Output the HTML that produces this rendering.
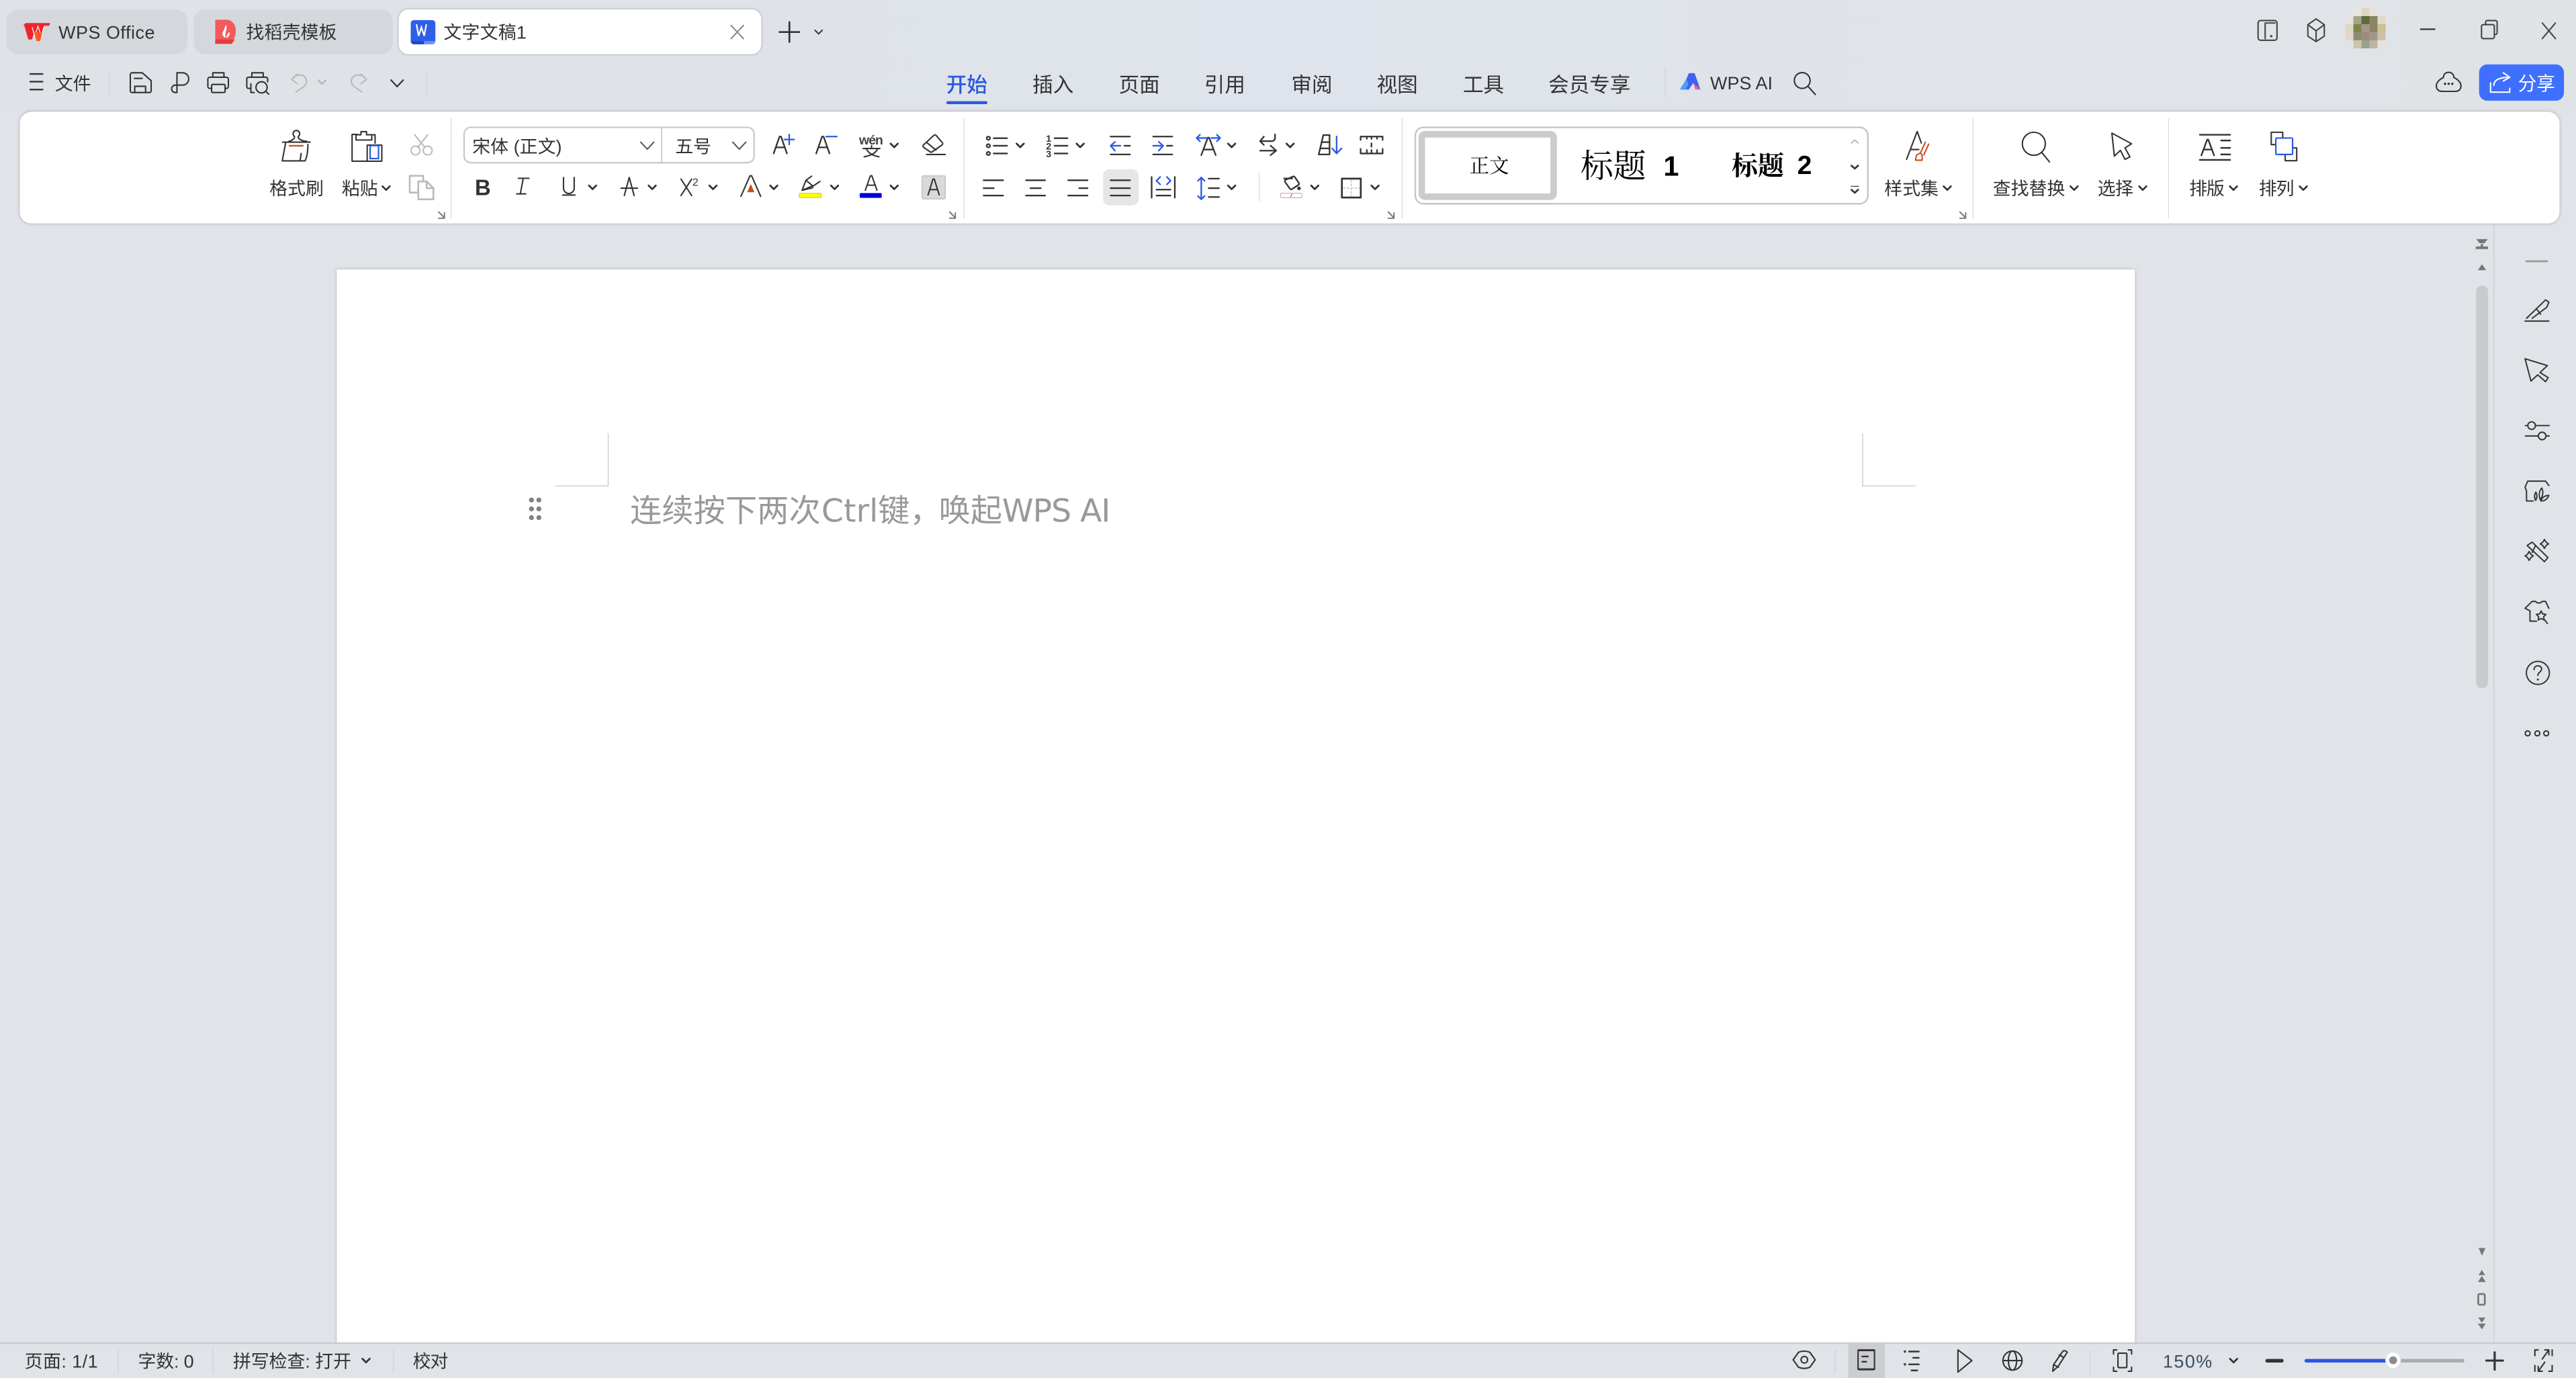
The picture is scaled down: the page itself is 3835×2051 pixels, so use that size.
<!DOCTYPE html>
<html><head><meta charset="utf-8"><style>
html,body{margin:0;padding:0;background:#e0e3e7;width:3835px;height:2051px;overflow:hidden}
svg{display:block}
text{font-family:"Liberation Sans","Noto Sans CJK SC",sans-serif;fill:#333;font-size:11px}
.i{fill:none;stroke:#333;stroke-width:.85;stroke-linecap:round;stroke-linejoin:round}
.g{stroke:#b9b9b9}
.c{fill:none;stroke:#333;stroke-width:1.1;stroke-linecap:round;stroke-linejoin:round}
.s{stroke:#d2d4d8;stroke-width:.5}
.bl{stroke:#2a5be0}
</style></head><body>
<svg width="3835" height="2051" viewBox="0 0 1568 838.6" xmlns="http://www.w3.org/2000/svg">
<defs>
<linearGradient id="bg" x1="0" x2="1" y1="0" y2="0"><stop offset="0" stop-color="#dfe2e6"/><stop offset=".5" stop-color="#dfe3eb"/><stop offset="1" stop-color="#e0e3e6"/></linearGradient>
<path id="ch" d="M-2.200-1.100L0 1.100L2.200-1.100"/>
</defs>
<rect width="1568" height="838.6" fill="#e0e3e7"/>
<rect width="1568" height="68" fill="url(#bg)"/>

<!-- tabs -->
<rect x="4" y="5.700" width="110" height="27.300" rx="7" fill="#d4d8dc"/>
<rect x="118" y="5.700" width="121" height="27.300" rx="7" fill="#d4d8dc"/>
<rect x="242.700" y="5.700" width="220.700" height="27.300" rx="6" fill="#fff" style="filter:drop-shadow(0 .3px .8px rgba(0,0,0,.3))"/>
<path d="M15.500 14h15l-.6 1.700h-3.200l-2.200 8.300h-2.400l-1.300-4.800-1.300 4.800h-2.300l-2.400-8.300h-.7z" fill="#f0242c"/>
<path d="M19.500 16.500l1.600 5.500 2-6 2 6 1.600-5.500" fill="none" stroke="#fff" stroke-width=".5"/>
<path d="M20.700 19.500l1.500 5.500h2.200l1.300-5z" fill="#ff5a1f"/>
<text x="35.600" y="23.500" textLength="58.600">WPS Office</text>
<path d="M131 12h7a5.500 6.500 0 0 1 5.500 7v0a5.500 7.500 0 0 1-5.500 7.500h-7z" fill="#f35a5a"/>
<path d="M131 24h12l-2 2.700h-10z" fill="#e23c3c"/>
<path d="M137.500 15c1 2 0 3.500-.3 5.500-.3 1.700.6 2.500.6 2.500s-2.400-.2-2.400-2.500c0-1 .5-1.500.8-2M137.800 23c.2-2 1-3 2-3.500 0 2-.6 3-2 3.500z" fill="#fff"/>
<text x="149.800" y="23.500" textLength="55.200">找稻壳模板</text>
<rect x="250" y="12.200" width="15" height="14.800" rx="2" fill="#2f5fe8"/>
<path d="M250 25h8v2h-6a2 2 0 0 1-2-2z" fill="#1f49c8"/>
<path d="M258 25h7v0a2 2 0 0 1-2 2h-5z" fill="#6d94f5"/>
<path d="M253.500 14.800l1.300 7 1.700-5.200 1.700 5.200 1.300-7" fill="none" stroke="#fff" stroke-width=".9"/>
<text x="270" y="23.500" textLength="50.500">文字文稿1</text>
<path class="i" style="stroke:#888" d="M445 15.500l7.500 8M452.500 15.500l-7.500 8"/>
<path class="i" style="stroke-width:1.100" d="M474.500 19.500h12M480.500 13.500v12"/>
<use href="#ch" x="498.300" y="19.500" class="c" style="stroke-width:.8"/>

<!-- title bar right -->
<g class="i" style="stroke:#444">
<rect x="1374.500" y="12.500" width="11.500" height="12" rx="1.500"/>
<path d="M1378.800 23.500v-9.500h6"/><circle cx="1382.500" cy="22" r=".3"/>
<path d="M1409.800 11.500l5 3.500v7l-5 3.300-5-3.300v-7zM1404.800 15l5 3.800 5-3.800M1409.800 18.800v6.500"/>
<path d="M1473.500 17.800h8.500" style="stroke-width:1"/>
<rect x="1510.500" y="15" width="7.800" height="8.500" rx="1"/>
<path d="M1513 15v-1.500a1 1 0 0 1 1-1h5a1 1 0 0 1 1 1v6.500a1 1 0 0 1-1 1h-.7"/>
<path d="M1547.500 14l8 9.500M1555.500 14l-8 9.500"/>
</g>
<g transform="translate(1427.600 4.900) scale(.4088)">
<rect x="12" y="0" width="12" height="12" fill="#e6e6e0"/><rect x="24" y="0" width="12" height="12" fill="#ddd6c3"/><rect x="36" y="0" width="12" height="12" fill="#e6e3da"/>
<rect x="0" y="12" width="12" height="12" fill="#e4e4e0"/><rect x="12" y="12" width="12" height="12" fill="#a6a484"/><rect x="24" y="12" width="12" height="12" fill="#5f693f"/><rect x="36" y="12" width="12" height="12" fill="#8b8560"/><rect x="48" y="12" width="12" height="12" fill="#e0dacb"/>
<rect x="0" y="24" width="12" height="12" fill="#dcd8c2"/><rect x="12" y="24" width="12" height="12" fill="#7e8347"/><rect x="24" y="24" width="12" height="12" fill="#a39785"/><rect x="36" y="24" width="12" height="12" fill="#8d8364"/><rect x="48" y="24" width="12" height="12" fill="#cdc094"/>
<rect x="0" y="36" width="12" height="12" fill="#e2d9cb"/><rect x="12" y="36" width="12" height="12" fill="#8f8a74"/><rect x="24" y="36" width="12" height="12" fill="#9e8a7e"/><rect x="36" y="36" width="12" height="12" fill="#a3978c"/><rect x="48" y="36" width="12" height="12" fill="#cfc0a4"/>
<rect x="12" y="48" width="12" height="12" fill="#cbc5ac"/><rect x="24" y="48" width="12" height="12" fill="#98a08e"/><rect x="36" y="48" width="12" height="12" fill="#bdb5a0"/><rect x="48" y="48" width="12" height="12" fill="#e4e2dc"/>
</g>

<!-- quick access -->
<path class="i" style="stroke-width:1" d="M18.400 45h7.500M18.400 49.700h7.500M18.400 54.500h7.500"/>
<text x="33.400" y="54.800" textLength="22">文件</text>
<path class="s" d="M66.400 43v15M259.800 43v15"/>
<g class="i">
<path d="M79.300 45.300a1 1 0 0 1 1-1h6.300l5.400 4.800v6.200a1 1 0 0 1-1 1h-10.700a1 1 0 0 1-1-1z"/><path d="M82 56.300v-3.800h6.600v3.800M81.800 47.700h4.700"/>
<path d="M107.700 56.300V44.300h3.400a3.750 3.750 0 0 1 0 7.500h-3.400M107.700 51.800h-1a2.250 2.250 0 0 0 0 4.500h1"/>
<path d="M129.500 47v-2.700h6.800v2.700"/><rect x="126.500" y="47" width="12.500" height="6.800" rx="1.200"/><rect x="128.800" y="51.400" width="8.200" height="4.900" rx=".6" style="fill:#e0e3e7"/>
<path d="M153.300 47v-2.700h6.900v2.700M162.900 49.800v-1.800a1 1 0 0 0-1-1h-10.700a1 1 0 0 0-1 1v4.800a1 1 0 0 0 1 1h1.500M152.700 51v5.300h2"/><circle cx="159.200" cy="53.150" r="3.400"/><path d="M161.700 55.600l1.900 1.700"/>
</g>
<g class="i g">
<path d="M180.800 45.200l-3.300 3.100 3.300 2.600M177.700 48.500c1-2 3-2.900 5-2.900 2.200 0 3.800 1.800 3.800 3.900 0 1.500-.8 2.500-1.500 3.200l-4.800 3.200"/>
<path d="M219.700 45.200l3.300 3.100-3.300 2.600M222.800 48.300c-1-2-3-2.700-5-2.700-2.200 0-4 1.800-4 3.900 0 1 .8 2.200 1.500 3l4.800 3.400"/>
</g>
<use href="#ch" x="196" y="50" class="c" style="stroke:#b9b9b9"/>
<path class="c" style="stroke-width:.9" d="M238 48.700l3.700 4 3.700-4"/>

<!-- main tabs -->
<text x="576" y="56" textLength="25" style="fill:#2a57e0;font-size:12.500px;font-weight:500">开始</text>
<text x="628.500" y="56" textLength="25" style="font-size:12.500px">插入</text>
<text x="681" y="56" textLength="25" style="font-size:12.500px">页面</text>
<text x="733" y="56" textLength="25" style="font-size:12.500px">引用</text>
<text x="786" y="56" textLength="25" style="font-size:12.500px">审阅</text>
<text x="838" y="56" textLength="25" style="font-size:12.500px">视图</text>
<text x="890.500" y="56" textLength="25" style="font-size:12.500px">工具</text>
<text x="942.500" y="56" textLength="50" style="font-size:12.500px">会员专享</text>
<rect x="576" y="61.600" width="25" height="1.800" rx=".9" fill="#2a57e0"/>
<path class="s" d="M1013.500 41v18.500"/>
<path d="M1028 44.500h3.500l3.500 10h-3l-1.300-4-2.700 4h-4.200z" fill="#3b63f0"/>
<path d="M1022.500 54.500l4-6.500 1.200 3.500-1.800 3z" fill="#4ba0f8"/>
<path d="M1030.700 50.500l4.300 4h-3z" fill="#f15fa4"/>
<text x="1041" y="54.300" textLength="38">WPS AI</text>
<g class="i"><circle cx="1097" cy="49" r="4.800"/><path d="M1100.500 52.500l4.500 5"/></g>

<path class="i" d="M1490.500 44c-2 0-3.200 1.500-3.200 3.200-2.300 1-4.300 3-4.300 5 0 2.300 1.500 3.400 3.500 3.400h8c2 0 3.500-1.100 3.500-3.400 0-2-2-4-4.300-5 0-1.700-1.200-3.200-3.200-3.200z"/>
<circle cx="1488.300" cy="51" r=".7" fill="#333"/><circle cx="1490.500" cy="51" r=".7" fill="#333"/><circle cx="1492.700" cy="51" r=".7" fill="#333"/>
<rect x="1509" y="39.200" width="51.700" height="22.100" rx="5" fill="#3f6fff"/>
<g class="i" style="stroke:#fff"><path d="M1516 50.400v5.700h11.700v-2.300"/><path d="M1518 52c0-3 2.500-5 9.700-5M1523.800 44.300l3.900 2.700-3.900 2.300"/></g>
<text x="1532.700" y="54.800" textLength="22.600" style="fill:#fff;font-size:11.300px">分享</text>

<!-- ribbon panel -->
<rect x="12" y="68" width="1546" height="68" rx="7" fill="#fff" style="filter:drop-shadow(0 0 1px rgba(0,0,0,.28))"/>
<path class="s" style="stroke:#dadada" d="M274.600 72v61M586.700 72v61M853.500 72v61M1201 72v61M1320 72v61M766.500 105v17.600"/>

<!-- clipboard -->
<g class="i">
<path d="M172 86.500h16.800M175.800 86c1.200-.3 3.500-1.200 3.500-2.900-.6-.5-.9-1.100-.9-1.700a2.000 2.000 0 0 1 4 0c0 .6-.3 1.200-.9 1.700 0 1.700 2.300 2.600 5.200 2.900"/>
<path d="M173.800 87.200l-2 10.700h13.900c1.200-2.500 1.700-6.500 1.700-10M183.300 93.400l-.6 4.100"/>
</g>
<path d="M175.800 88.700h8.900" stroke="#c8501e" stroke-width="1" fill="none"/>
<g class="i">
<path d="M217.400 81.800h-3.100v16.300h9.200M228.300 87.200v-5.200h-1.500"/>
<path d="M216.700 85.200v-3.200h3v-1.900h3.400v1.900h3.200v3.200z"/>
<rect x="223.500" y="88.300" width="8.900" height="9.800" rx=".4"/>
</g>
<rect x="225.300" y="88.600" width="5.100" height="7.900" fill="#fff" stroke="#2a5be0" stroke-width=".9"/>
<path class="i" style="stroke:#bbb" d="M252.400 82l6.200 7.700M260.300 82l-6.100 7.700"/>
<circle cx="252.900" cy="91.600" r="2.700" fill="none" stroke="#bbb" stroke-width=".85"/><circle cx="260.300" cy="91.600" r="2.700" fill="none" stroke="#bbb" stroke-width=".85"/>
<path class="i" style="stroke:#bbb;stroke-width:1.100" d="M254.600 117.200h-5.200v-10.200h8.200v2.700M254.600 110.400h5.100l4.100 4.100v6.800h-9.200zM259.700 110.400v4.100h4.100"/>
<text x="164" y="118.500" textLength="33">格式刷</text>
<text x="208" y="118.500" textLength="22">粘贴</text>
<use href="#ch" x="235" y="114.500" class="c"/>
<path class="i" style="stroke:#777;stroke-width:.8" d="M267 129l3.500 3.500M270.500 129.500v3.300h-3.500"/>

<!-- font group -->
<rect x="282.500" y="77.500" width="176.500" height="21.500" rx="4" fill="#fff" stroke="#c8c8c8" stroke-width=".9"/>
<path stroke="#c8c8c8" stroke-width=".7" d="M402.700 78v21"/>
<text x="287.500" y="93" textLength="54.500">宋体 (正文)</text>
<text x="411" y="93" textLength="22">五号</text>
<path class="i" style="stroke:#555;stroke-width:.8" d="M390 86.500l4 4.300 4-4.300M446 86.500l4 4.300 4-4.300"/>

<g class="i" style="stroke-width:.95">
<path d="M470.900 93.400l3.600-10.300h.9l3.600 10.300M472.500 89.700h5"/>
<path d="M496.800 93.400l3.600-10.300h.9l3.600 10.300M498.400 89.700h5"/>
<path class="bl" d="M477.400 84.900h6M480.400 81.900v6M502.900 83.100h6.500"/>
</g>
<text x="522.900" y="88" textLength="14.700" style="font-size:8px;font-weight:700;fill:#444">wén</text>
<path class="i" d="M525.400 90.400h10.200M530.500 88.600v1.800M527.400 90.600c1 2.500 4 4.200 7.600 4.800M534.200 90.600c-1 2.500-4.500 4.200-8.200 4.800"/>
<use href="#ch" x="544.300" y="88.500" class="c"/>
<g class="i"><path d="M568.500 82.300a1 1 0 0 1 1.300.1l3.800 4.400a1 1 0 0 1-.2 1.400l-6 4.200a1 1 0 0 1-1.200 0l-4-2.700a1 1 0 0 1-.1-1.500zM564.200 86.800l5.500 4.500M564 94h11.400"/></g>

<text x="289" y="118.800" style="font-size:13.500px;font-weight:700" textLength="8.500">B</text>
<path class="i" d="M315.500 108.500h6.500M314.500 118h5.500M318.500 108.500l-1.800 9.500"/>
<path class="i" d="M343 108v6.500a3.200 3.200 0 0 0 6.500 0V108M342.500 118.700h7.500"/>
<use href="#ch" x="360.700" y="114" class="c"/>
<path class="i" d="M380 119l3-11 3 11M378 114.500h10"/>
<use href="#ch" x="397" y="114" class="c"/>
<path class="i" d="M414.500 109l6.500 10M421 109l-6.500 10"/>
<text x="421.500" y="113" style="font-size:6.500px">2</text>
<use href="#ch" x="434" y="114" class="c"/>
<path class="i" d="M451 119.500l5.500-12.500h1l5.500 12.500"/>
<path d="M457 112l-2.200 5h4.400z" fill="#c8501e"/>
<use href="#ch" x="471" y="114" class="c"/>
<path class="i" d="M488.200 115.800l2.400-6.100 4.100 3.400zM494.700 113.400l4.400-3M490.600 109.700l3.400-2.500M488.200 115.800l6.500-1.500"/>
<rect x="486.500" y="117.500" width="13.400" height="2.800" rx=".6" fill="#ffff00" stroke="#c8c400" stroke-width=".35"/>
<use href="#ch" x="508" y="114" class="c"/>
<path class="i" d="M526.700 115.800l3.100-8.800h.9l3.100 8.800M527.900 112.700h5"/>
<rect x="523.300" y="117.500" width="13.400" height="2.900" rx=".6" fill="#0000e0"/>
<use href="#ch" x="544.300" y="114" class="c"/>
<rect x="561.300" y="107" width="14" height="14" rx=".8" fill="#d9d9d9" stroke="#c8c8c8" stroke-width=".8"/>
<path class="i" d="M564.900 118.600l3-9.600h.8l3 9.600M566 115.400h4.600"/>
<path class="i" style="stroke:#777;stroke-width:.8" d="M578 129l3.500 3.500M581.500 129.500v3.300h-3.500"/>

<!-- paragraph group -->
<g class="i" style="stroke-width:.95">
<circle cx="601.600" cy="84.100" r="1"/><circle cx="601.600" cy="88.700" r="1"/><circle cx="601.600" cy="93.400" r="1"/>
<path d="M604.800 84.100h8.200M604.800 88.700h8.200M604.800 93.400h8.200"/>
<path d="M641.900 84.100h7.900M641.900 88.700h7.900M641.900 93.400h7.900"/>
</g>
<text x="636.700" y="86.300" style="font-size:5.800px;font-weight:700">1</text>
<text x="636.700" y="91" style="font-size:5.800px;font-weight:700">2</text>
<text x="636.700" y="95.700" style="font-size:5.800px;font-weight:700">3</text>
<use href="#ch" x="621" y="88.500" class="c"/>
<use href="#ch" x="657.500" y="88.500" class="c"/>
<g class="i" style="stroke-width:.95">
<path d="M676 83.100h11.800M684.400 88.700h3.400M676 94h11.800"/>
<path d="M701.900 83.100h11.700M710.300 88.700h3.300M701.900 94h11.700"/>
<path class="bl" d="M682 88.700h-6M678.700 86.300l-2.700 2.400 2.700 3"/>
<path class="bl" d="M701.900 88.700h6.100M705.300 86.300l2.700 2.400-2.700 3"/>
<path d="M731.200 94.400l4-10.600h.8l4 10.600M732.600 91h6"/>
<path class="bl" d="M728.400 84h6.200M730.400 82l-2 2 2 2M737.300 84h5.400M740.700 82l2 2-2 2"/>
<path d="M776.100 81.800v2.100a2 2 0 0 1-2 2h-7.100M769.300 83.100l-2.300 2.800 2.300 2.300M767 91.700h9.800M773.400 88.600l3.400 3.100-3.400 2.700"/>
<path d="M805.500 82.200h3.800v11.800h-6.600zM804.400 86.500h4.900M803.700 90.300h5.600"/>
<path class="bl" d="M813.600 83.100v10.300M810.900 90.300l2.700 3.100 3-3.100"/>
<path d="M828.200 85.200v-2.100h13.400v2.100M832 83.100v1.400M834.800 83.100v1.400M838.200 83.100v1.400M828.200 90.600v2.800h13.400v-2.800M832 91.300v2M834.800 91.300v2M838.200 91.300v2M834.800 87.200v2.100"/>
</g>
<use href="#ch" x="749.700" y="88.500" class="c"/>
<use href="#ch" x="785.300" y="88.500" class="c"/>

<rect x="671.400" y="103" width="21.700" height="22" rx="4" fill="#e6e6e6"/>
<g class="i" style="stroke-width:.95">
<path d="M598.700 109.700h11.900M598.700 114.500h6.200M598.700 119h11.900"/>
<path d="M624.500 109.700h11.700M627.200 114.500h6.300M624.500 119h11.700"/>
<path d="M650.200 109.700h11.800M656.900 114.500h5.100M650.200 119h11.800"/>
<path d="M676 109.700h11.800M676 114.500h11.800M676 119h11.800"/>
<path d="M701 107.700v12.600M715.100 107.700v12.600M703.900 115.400h8.600M703.900 119h8.600"/>
<path class="bl" d="M706.200 107.700l-2.300 2.300 2.300 2.200M710.300 107.700l2.200 2.300-2.200 2.200"/>
<path d="M735.700 108.700h6.300M735.700 114.500h6.300M735.700 119.900h6.300"/>
<path class="bl" d="M731.200 108v13.300M729.200 110l2-2 2 2M729.200 119.300l2 2 2-2"/>
<path d="M787.100 107.400a1 1 0 0 1 1 .3l2.500 3.600a1 1 0 0 1-.2 1.200l-4 2.600a1 1 0 0 1-1.200-.2l-3-4.200a1 1 0 0 1 .2-1.200zM781.600 108.600h5"/>
<path style="stroke-width:1.100" d="M816.800 108.700h11.500v11.500h-11.500z"/>
</g>
<circle cx="790.700" cy="114.600" r="1.100" fill="#333"/>
<rect x="779.500" y="117.600" width="13" height="2.700" rx=".6" fill="#fff" stroke="#aaa" stroke-width=".4"/>
<path d="M785.300 120.100l1.300-2.300" stroke="#e03030" stroke-width=".4"/>
<path d="M822.500 109.500v10.200M817.500 114.500h10" stroke="#c8c8c8" stroke-width=".7" stroke-dasharray="1.500 .8"/>
<use href="#ch" x="749.700" y="114" class="c"/>
<use href="#ch" x="800.300" y="114" class="c"/>
<use href="#ch" x="837" y="114" class="c"/>
<path class="i" style="stroke:#777;stroke-width:.8" d="M845 129l3.500 3.500M848.500 129.500v3.300h-3.500"/>

<!-- styles -->
<rect x="861.500" y="77.500" width="275.500" height="46.500" rx="5" fill="#fff" stroke="#c6c6c6" stroke-width="1"/>
<rect x="865.400" y="81.700" width="80.300" height="38" rx="2" fill="#fff" stroke="#ccc" stroke-width="4"/>
<text x="894.500" y="105" textLength="24" style="font-family:'Liberation Serif','Noto Serif CJK SC',serif;font-size:12px;fill:#000">正文</text>
<text x="962" y="108" textLength="40" style="font-family:'Liberation Serif','Noto Serif CJK SC',serif;font-size:20px;fill:#000">标题</text>
<text x="1012.500" y="107" style="font-size:17px;font-weight:700;fill:#000">1</text>
<text x="1054" y="106.500" textLength="32" style="font-family:'Liberation Serif','Noto Serif CJK SC',serif;font-size:16px;font-weight:700;fill:#000">标题</text>
<text x="1094" y="106" style="font-size:16px;font-weight:700;fill:#000">2</text>
<path class="c" style="stroke:#bbb;stroke-width:.8" d="M1127 87l2-1.800 2 1.800"/>
<path class="c" d="M1127 100.800l2 1.800 2-1.800"/>
<path d="M1126.500 113.400h5" stroke="#555" stroke-width=".6"/>
<path class="c" d="M1127 115.500l2 1.800 2-1.800"/>

<g class="i"><path d="M1160.500 97l6.500-17 2.500 7M1163 91h5"/></g>
<path class="i" style="stroke:#c8501e" d="M1170 97.500h-4l.5-3 2.500-1.500 1 1.500zM1169 93l3-6.500M1171 94.200l3-6.500"/>
<text x="1147" y="118.500" textLength="33">样式集</text>
<use href="#ch" x="1185.300" y="114.500" class="c"/>
<path class="i" style="stroke:#777;stroke-width:.8" d="M1193 129l3.500 3.500M1196.500 129.500v3.300h-3.500"/>

<!-- find / select -->
<g class="i"><circle cx="1238" cy="87.500" r="7"/><path d="M1243 93l4.500 5.500"/></g>
<text x="1213" y="118.500" textLength="44">查找替换</text>
<use href="#ch" x="1262.500" y="114.500" class="c"/>
<path class="i" d="M1285.500 81l12 6.500-4 2.500 3 5.500-3 1.500-2.800-5.500-3.700 3.500z"/>
<text x="1276.800" y="118.500" textLength="21.800">选择</text>
<use href="#ch" x="1304.300" y="114.500" class="c"/>

<g class="i" style="stroke-width:1">
<path d="M1339 82h18.500M1339 97.300h18.500M1352 85.500h5.500M1352 90h5.500M1352 94h5.500"/>
<path d="M1340 94.500l3.500-9.500h.7l3.500 9.500M1341.500 91h5"/>
</g>
<text x="1332.600" y="118.500" textLength="21.500">排版</text>
<use href="#ch" x="1359.500" y="114.500" class="c"/>
<g class="i"><path d="M1388.500 88h-6v-7.500h7v3.300M1391 90h7v7.800h-7v-4.800"/></g>
<rect x="1385.300" y="84" width="10.200" height="10" rx=".6" fill="#fff" stroke="#2a5be0" stroke-width=".9"/>
<text x="1375" y="118.500" textLength="21.500">排列</text>
<use href="#ch" x="1402" y="114.500" class="c"/>

<!-- document page -->
<rect x="205" y="164" width="1094.500" height="655" fill="#fff" style="filter:drop-shadow(0 0 1px rgba(0,0,0,.22))"/>
<path d="M338 295.700h32.200v-32M1166 295.700h-32.200v-32" fill="none" stroke="#cfcfcf" stroke-width=".6"/>
<g fill="#808080">
<ellipse cx="323.500" cy="304.300" rx="1.500" ry="1.500"/><ellipse cx="328" cy="304.300" rx="1.500" ry="1.500"/>
<ellipse cx="323.500" cy="309.700" rx="1.500" ry="1.500"/><ellipse cx="328" cy="309.700" rx="1.500" ry="1.500"/>
<ellipse cx="323.500" cy="315" rx="1.500" ry="1.500"/><ellipse cx="328" cy="315" rx="1.500" ry="1.500"/>
</g>
<text x="383.500" y="317.500" style="font-size:19.300px;fill:#999" textLength="116">连续按下两次</text>
<text x="500" y="317.500" style="font-family:'DejaVu Sans',sans-serif;font-size:19.300px;fill:#999" textLength="34.500">Ctrl</text>
<text x="534.500" y="317.500" style="font-size:19.300px;fill:#999" textLength="38.500">键，</text>
<text x="571.500" y="317.500" style="font-size:19.300px;fill:#999" textLength="38.500">唤起</text>
<text x="610" y="317.500" style="font-family:'DejaVu Sans',sans-serif;font-size:19.300px;fill:#999" textLength="66">WPS AI</text>

<!-- right side -->
<path stroke="#c8ccd0" stroke-width=".5" d="M1518 137v680"/>
<rect x="1507.200" y="173.800" width="7.300" height="245" rx="3.600" fill="#c8cacd"/>
<g fill="#777">
<path d="M1507.300 145.500h7l-2 2.500h-3zM1507 150h7.500v1.600h-7.500zM1510 148.500h1.500v1.500h-1.500z"/>
<path d="M1510.800 160.800l2.500 3.600h-5z"/>
<path d="M1508.700 759.500h4.200l-2.100 4.700z"/>
<path d="M1510.700 772.800l2 3.200h-4zM1510.700 776.500l2.400 3.700h-4.800z"/>
<rect x="1508.500" y="787.500" width="4" height="6.500" rx=".8" fill="none" stroke="#777" stroke-width="1.100"/>
<path d="M1508.500 801.800h4.400l-2.200 3.200zM1508.300 805.500h4.800l-2.400 3.500z"/>
</g>
<g class="i" style="stroke-width:.8">
<path d="M1537.800 159h12.600" style="stroke:#999;stroke-width:1.100"/>
<path d="M1537 195.400h14.500M1537.900 193.700l11.600-11.200 2 1.400-1.300 3.100-8.900 6.700M1544 188.100l2.500 3.100"/>
<path d="M1537 218.300l13.600 4.200-4.500 4.200 5 3.100-1.600 2.500-4.800-4.200-4.100 3.800z"/>
<path d="M1537.200 259h14.500M1537.200 265.300h14.500"/>
<circle cx="1541" cy="259" r="2.300" style="fill:#e0e3e7"/><circle cx="1547.400" cy="265.300" r="2.300" style="fill:#e0e3e7"/>
<path d="M1542 304.900h-4.100v-6.200l-.9-2.100 1.600-3.800h10.900l2 2.700"/>
<path d="M1543.600 299.500c-1 1.500-1.200 3-.2 5 1-1.500 1.200-3 .2-5zM1547.200 297c-1.500 1.500-2 4-1 7 1.500-1.500 2.200-4.500 1-7zM1551.500 301.500c-2 0-4 1-5 3.300 2.500.3 4-1 5-3.300z"/>
<path d="M1541.300 329.900l9.600 9.400-2.100 2.500-10.500-9.800zM1543.400 332l-2.100 4.200"/>
<path d="M1548.800 328.300l1 1.700 1.500 1-1.500 1-1 1.700-1-1.700-1.500-1 1.500-1zM1539.500 335.600l1 1.700 1.500 1-1.500 1-1 1.700-1-1.700-1.500-1 1.500-1z"/>
<path d="M1544 378h-4v-6.300l-3 -1.500 4.300-4.200h2.100c1 1.300 3 1.300 4 0h2.100l2 4.200"/>
<path d="M1546.800 371.800l.9 1.800 2 .3-1.400 1.400.3 2-1.800-.9-1.800.9.300-2-1.400-1.400 2-.3zM1548.800 377l1.800 2.400"/>
<circle cx="1544.800" cy="409.500" r="7"/>
<path d="M1542.500 407.500c0-1.500 1-2.300 2.300-2.300s2.300.8 2.300 2c0 1.800-2.300 1.800-2.300 3.800"/>
<circle cx="1538.600" cy="446.300" r="1.500"/><circle cx="1544.500" cy="446.300" r="1.500"/><circle cx="1549.900" cy="446.300" r="1.500"/>
</g>
<circle cx="1544.800" cy="413.500" r=".6" fill="#333"/>

<!-- status bar -->
<rect x="0" y="817.800" width="1568" height="21" fill="#e0e3e7"/>
<rect x="0" y="816.900" width="1568" height="1" fill="#c9cace"/>
<text x="15" y="832.300" textLength="44.500">页面: 1/1</text>
<text x="84" y="832.300" textLength="34">字数: 0</text>
<text x="141.800" y="832.300" textLength="72">拼写检查: 打开</text>
<use href="#ch" x="222.800" y="828" class="c"/>
<text x="251.300" y="832.300" textLength="21.500">校对</text>
<path class="s" style="stroke:#cfd1d5" d="M72 820.500v15.500M129.700 820.500v15.500M239.500 820.500v15.500M1117 821v15M1272.300 821v15"/>
<path d="M1125 817.500h22.400v21.100h-22.400z" fill="#cbcdd1"/>
<g class="i" style="stroke-width:.85">
<path d="M1091.500 827.500l3.200-4.500c2-1 5-1 7 0l3.200 4.500-3.200 4.500c-2 1-5 1-7 0z"/><circle cx="1098.300" cy="827.500" r="2"/>
<rect x="1131" y="821.500" width="10" height="12" rx=".5"/><path d="M1131 821.800h10M1131 833.200h10M1133.500 825.500h3.500M1133.500 828.700h2.500" style="stroke-width:1"/>
<path d="M1162 822.500h6M1164.500 826.300h3.500M1162 830.300h6M1163.500 834h3.500" style="stroke-width:1"/><circle cx="1159.500" cy="822.500" r=".3"/><circle cx="1159.500" cy="830.300" r=".3"/>
<path d="M1191.800 821.500l8.500 6.500-8.500 7z"/>
<circle cx="1225" cy="828" r="5.800"/><ellipse cx="1225" cy="828" rx="2.500" ry="5.800"/><path d="M1219.200 828h11.600"/>
<path d="M1249.500 834.500l.5-4 5.500-8c.6-.9 2.300-.5 2.800.5l-5.500 8.500zM1250 830.500l3 1.500M1253.500 824.500l2.500 1.500"/>
<path d="M1286.500 824v-2.500h2M1297.500 824v-2.500h-2M1286.500 832v2.500h2M1297.500 832v2.500h-2"/><rect x="1289.200" y="823.500" width="5.400" height="8.800" rx=".6"/>
<path d="M1543 825v-3.500h2M1553.500 831v3.500h-2M1553.500 825v-3.500M1543 831v3.500"/>
<path d="M1547.500 827l3.800-5.300M1549 821.500h2.500v3M1549 829l-3.800 5.300M1547.500 834.500h-2.500v-3"/>
</g>
<text x="1316.500" y="832.300" textLength="30" style="fill:#3e4d63">150%</text>
<use href="#ch" x="1359.600" y="828" class="c"/>
<rect x="1379" y="827" width="11" height="2.200" rx="1" fill="#333"/>
<rect x="1402.800" y="827" width="54" height="2.200" rx="1" fill="#2a57e0"/>
<rect x="1456" y="827" width="44" height="2.200" rx="1" fill="#acacac"/>
<ellipse cx="1456.700" cy="827.800" rx="4.600" ry="5" fill="#fff" stroke="#ddd" stroke-width=".4"/>
<circle cx="1456.700" cy="827.800" r="2.400" fill="#8c8c8c"/>
<path d="M1513.500 828h10M1518.500 823v10.500" stroke="#333" stroke-width="1.300" stroke-linecap="round"/>
</svg>
</body></html>
